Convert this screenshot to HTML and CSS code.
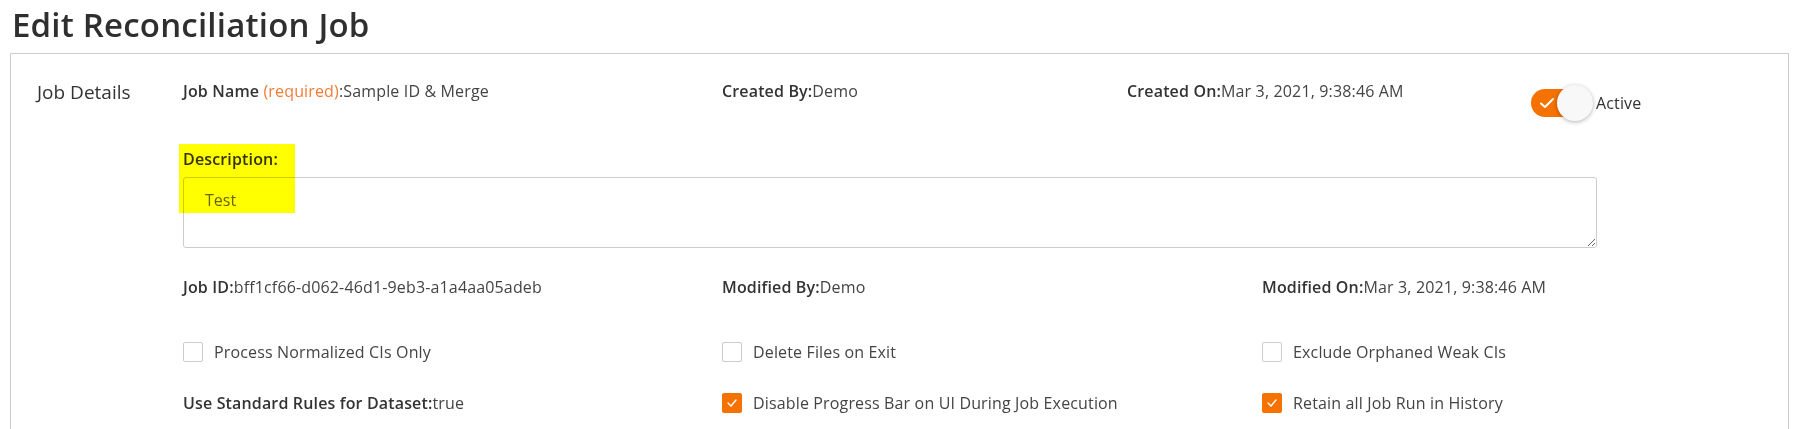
FILE: index.html
```html
<!DOCTYPE html>
<html lang="en">
<head>
    <meta charset="UTF-8">
    <title>Edit Reconciliation Job</title>
    <link rel="stylesheet" href="styles.css">
</head>
<body>
    <!-- Header -->
    <h1 class="page-title">Edit Reconciliation Job</h1>

    <!-- Job details panel -->
    <section class="panel">
        <div class="panel-label">Job Details</div>

        <div class="panel-body">
            <div class="row row-top">
                <div class="field"><b>Job Name</b> <span class="req">(required)</span>:Sample ID &amp; Merge</div>
                <div class="field"><b>Created By:</b>Demo</div>
                <div class="field"><b>Created On:</b>Mar 3, 2021, 9:38:46 AM</div>
                <div class="switch-wrap">
                    <span class="switch-track">
                        <svg width="16" height="12" viewBox="0 0 16 12"><polyline points="2,6.5 6,10 14,2" fill="none" stroke="#fff" stroke-width="2" stroke-linecap="round" stroke-linejoin="round"/></svg>
                    </span>
                    <span class="switch-knob"></span>
                    <span class="switch-text">Active</span>
                </div>
            </div>

            <div class="desc">
                <label class="desc-label" for="desc">Description:</label>
                <textarea id="desc" class="desc-input">Test</textarea>
                <span class="marker"></span>
            </div>

            <div class="row row-three row-ids">
                <div class="field"><b>Job ID:</b>bff1cf66-d062-46d1-9eb3-a1a4aa05adeb</div>
                <div class="field"><b>Modified By:</b>Demo</div>
                <div class="field"><b>Modified On:</b>Mar 3, 2021, 9:38:46 AM</div>
            </div>

            <div class="row row-three row-checks">
                <div class="check"><span class="box"></span>Process Normalized CIs Only</div>
                <div class="check"><span class="box"></span>Delete Files on Exit</div>
                <div class="check"><span class="box"></span>Exclude Orphaned Weak CIs</div>
            </div>

            <div class="row row-three row-checks2">
                <div class="field"><b>Use Standard Rules for Dataset:</b>true</div>
                <div class="check"><span class="box on"><svg width="12" height="10" viewBox="0 0 12 10"><polyline points="2,5 5,8 10,2" fill="none" stroke="#fff" stroke-width="1.4" stroke-linecap="round" stroke-linejoin="round"/></svg></span>Disable Progress Bar on UI During Job Execution</div>
                <div class="check"><span class="box on"><svg width="12" height="10" viewBox="0 0 12 10"><polyline points="2,5 5,8 10,2" fill="none" stroke="#fff" stroke-width="1.4" stroke-linecap="round" stroke-linejoin="round"/></svg></span>Retain all Job Run in History</div>
            </div>
        </div>
    </section>
</body>
</html>
```

FILE: styles.css
```css
body {
    margin: 0;
    padding: 0;
    font-family: "Open Sans", Arial, sans-serif;
    color: #333;
    background: #fff;
    overflow: hidden;
}

.page-title {
    margin: 0;
    padding: 3px 0 0 12px;
    height: 50px;
    font-size: 33px;
    font-weight: 600;
    letter-spacing: 0.2px;
    line-height: 44px;
    color: #2f2f2f;
}

.panel {
    display: flex;
    margin-left: 10px;
    width: 1779px;
    height: 400px;
    border: 1px solid #ccc;
    box-sizing: border-box;
}

.panel-label {
    flex-shrink: 0;
    width: 146px;
    padding: 25px 0 0 26px;
    font-size: 19px;
    line-height: 26px;
    color: #333;
}

.panel-body {
    flex: 1;
    min-width: 0;
    padding-top: 26px;
    font-size: 16px;
    letter-spacing: 0.15px;
    line-height: 22px;
}

.row {
    display: grid;
}

.row-top {
    grid-template-columns: 539px 405px 404px auto;
}

.row-three {
    grid-template-columns: 539px 540px 540px;
}

.field {
    color: #444;
    white-space: nowrap;
}

.field b {
    font-weight: 600;
    color: #333;
}

.req {
    color: #f47b35;
}

/* switch */
.switch-wrap {
    display: flex;
    align-items: center;
    margin-top: 5px;
    height: 36px;
}

.switch-track {
    display: flex;
    align-items: center;
    width: 50px;
    height: 28px;
    padding-left: 8px;
    box-sizing: border-box;
    border-radius: 14px;
    background: #f57200;
}

.switch-knob {
    width: 36px;
    height: 36px;
    margin-left: -24px;
    border-radius: 50%;
    background: #f8f8f8;
    box-shadow: 0 1px 4px rgba(0, 0, 0, 0.3);
}

.switch-text {
    margin-left: 3px;
    font-size: 16px;
    color: #333;
}

/* description */
.desc {
    position: relative;
    margin-top: 27px;
}

.desc-label {
    display: block;
    font-weight: 600;
    color: #333;
}

.desc-input {
    display: block;
    margin-top: 7px;
    width: 1414px;
    height: 71px;
    box-sizing: border-box;
    padding: 11px 21px;
    border: 1px solid #ccc;
    border-radius: 3px;
    font-family: inherit;
    font-size: 16px;
    line-height: 22px;
    color: #666;
    resize: vertical;
}

.marker {
    position: absolute;
    left: -4px;
    top: -4px;
    width: 116px;
    height: 69px;
    background: #ffff00;
    mix-blend-mode: multiply;
    pointer-events: none;
}

.row-ids {
    margin-top: 28px;
}

.row-checks {
    margin-top: 43px;
}

.row-checks2 {
    margin-top: 29px;
}

.check {
    display: flex;
    align-items: center;
    color: #444;
}

.box {
    display: flex;
    align-items: center;
    justify-content: center;
    flex-shrink: 0;
    width: 20px;
    height: 20px;
    margin-right: 11px;
    box-sizing: border-box;
    border: 1px solid #ccc;
    border-radius: 2px;
    background: #fff;
}

.box.on {
    border-color: #f57200;
    background: #f57200;
}
```
